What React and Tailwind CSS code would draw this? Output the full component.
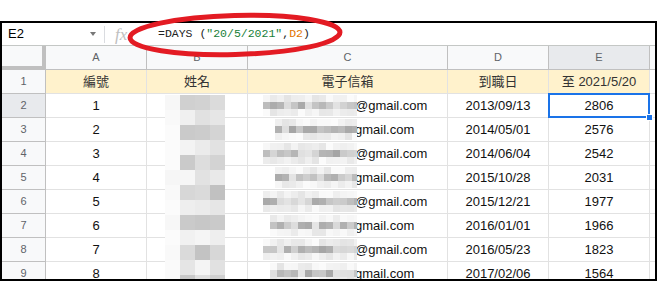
import React from "react";

function rnd(i) {
  const x = Math.sin(i * 12.9898 + 78.233) * 43758.5453;
  return x - Math.floor(x);
}

const rows = [
  ["1", "@gmail.com", "2013/09/13", "2806"],
  ["2", "gmail.com", "2014/05/01", "2576"],
  ["3", "@gmail.com", "2014/06/04", "2542"],
  ["4", "gmail.com", "2015/10/28", "2031"],
  ["5", "@gmail.com", "2015/12/21", "1977"],
  ["6", "gmail.com", "2016/01/01", "1966"],
  ["7", "@gmail.com", "2016/05/23", "1823"],
  ["8", "gmail.com", "2017/02/06", "1564"],
];

const emailStarts = [263, 275, 263, 275, 263, 270, 263, 270];

function NameMosaic() {
  const blocks = [];
  for (let r = 0; r < 13; r++) {
    for (let c = 0; c < 4; c++) {
      let g;
      if (c === 0) g = 246 + Math.floor(rnd(r * 7 + c) * 6);
      else {
        const v = rnd(r * 11 + c * 3 + 5);
        g = r % 2 === 0 ? 190 + Math.floor(v * 35) : 225 + Math.floor(v * 22);
      }
      blocks.push(
        <div
          key={r + "-" + c}
          style={{ backgroundColor: `rgb(${g},${g},${g})` }}
        />
      );
    }
  }
  return (
    <div className="absolute left-[163px] top-[72px] grid grid-cols-[15px_15px_15px_15px] auto-rows-[15px]">
      {blocks}
    </div>
  );
}

function EmailMosaic({ index }) {
  const start = emailStarts[index];
  const width = 357 - start;
  const n = Math.ceil(width / 7);
  const strips = [0, 1, 2];
  return (
    <div
      className="absolute flex flex-col"
      style={{ left: start - 2, top: 72 + index * 24, width }}
    >
      {strips.map((s) => (
        <div key={s} className="flex h-[7px] overflow-hidden">
          {Array.from({ length: n }).map((_, k) => {
            const v = rnd(index * 97 + s * 31 + k * 3 + 1);
            const g =
              s === 1
                ? 165 + Math.floor(v * 65)
                : 228 + Math.floor(v * 24);
            return (
              <div
                key={k}
                className="w-[7px] shrink-0"
                style={{ backgroundColor: `rgb(${g},${g},${g})` }}
              />
            );
          })}
        </div>
      ))}
    </div>
  );
}

const colW = ["w-[101px]", "w-[101px]", "w-[200px]", "w-[101px]", "w-[101px]"];

export default function App() {
  return (
    <div className="relative w-[660px] h-[282px] bg-white overflow-hidden font-['Liberation_Sans',sans-serif]">
      <div className="mt-[21px] w-[657px] h-[260px] border-2 border-black overflow-hidden relative bg-white">
        {/* formula bar */}
        <div className="flex h-[23px] border-b border-[#c4c7c5] items-center">
          <div className="w-[102px] flex items-center justify-between pl-[6px] pr-[8px]">
            <span className="text-[13px] text-black">E2</span>
            <span className="w-0 h-0 border-l-[3.5px] border-r-[3.5px] border-t-[4px] border-l-transparent border-r-transparent border-t-[#777]" />
          </div>
          <div className="w-px h-[17px] bg-[#dadce0]" />
          <div className="w-[53px] pl-[10px] text-[17px] italic text-[#c0c0c0] font-['Liberation_Serif',serif] leading-none">
            fx
          </div>
          <div className="text-[11.5px] font-['Liberation_Mono',monospace] text-[#222] whitespace-pre">
            =DAYS (<span className="text-[#188038]">"20/5/2021"</span>,<span className="text-[#e37400]">D2</span>)
          </div>
        </div>
        {/* column header */}
        <div className="flex h-[24px] bg-[#f8f9fa] text-[11px] text-[#5f6368]">
          <div className="w-[44px] border-r-4 border-b-4 border-[#c0c0c0]" />
          {["A", "B", "C", "D", "E"].map((l, i) => (
            <div
              key={l}
              className={`${colW[i]} flex items-center justify-center border-r border-b border-[#c0c0c0] ${
                l === "E" ? "bg-[#e8eaed]" : ""
              }`}
            >
              {l}
            </div>
          ))}
          <div className="flex-1 border-b border-[#c0c0c0]" />
        </div>
        {/* row 1 */}
        <div className="flex h-[24px] text-[13px]">
          <div className="w-[44px] bg-[#f8f9fa] border-r border-b border-[#c0c0c0] flex items-center justify-center text-[11px] text-[#5f6368]">
            1
          </div>
          {["編號", "姓名", "電子信箱", "到職日", "至 2021/5/20"].map((t, i) => (
            <div
              key={t}
              className={`${colW[i]} bg-[#fff2cc] flex items-center justify-center border-r border-b border-[#e2e2e2] text-[#333] font-['Liberation_Sans','Noto_Sans_CJK_TC',sans-serif]`}
            >
              {t}
            </div>
          ))}
          <div className="flex-1 border-b border-[#e2e2e2]" />
        </div>
        {rows.map((r, idx) => (
          <div key={idx} className="flex h-[24px] text-[13px] text-[#111]">
            <div
              className={`w-[44px] border-r border-b border-[#c0c0c0] flex items-center justify-center text-[11px] text-[#5f6368] ${
                idx === 0 ? "bg-[#e8eaed]" : "bg-[#f8f9fa]"
              }`}
            >
              {idx + 2}
            </div>
            <div className={`${colW[0]} flex items-center justify-center border-r border-b border-[#e2e2e2]`}>
              {r[0]}
            </div>
            <div className={`${colW[1]} border-r border-b border-[#e2e2e2]`} />
            <div className={`${colW[2]} flex items-center pl-[107px] border-r border-b border-[#e2e2e2]`}>
              {r[1]}
            </div>
            <div className={`${colW[3]} flex items-center justify-center border-r border-b border-[#e2e2e2]`}>
              {r[2]}
            </div>
            <div className={`${colW[4]} flex items-center justify-center border-r border-b border-[#e2e2e2]`}>
              {r[3]}
            </div>
            <div className="flex-1 border-b border-[#e2e2e2]" />
          </div>
        ))}
        <NameMosaic />
        {rows.map((_, i) => (
          <EmailMosaic key={i} index={i} />
        ))}
        {/* selection */}
        <div className="absolute left-[546px] top-[70px] w-[102px] h-[25px] border-2 border-[#1a73e8]" />
        <div className="absolute left-[644px] top-[91px] w-[7px] h-[7px] bg-[#1a73e8] border border-white" />
      </div>
      <svg
        className="absolute left-0 top-0 pointer-events-none"
        width="660"
        height="282"
      >
        <ellipse
          cx="235"
          cy="35"
          rx="105"
          ry="19.5"
          fill="none"
          stroke="#e31b23"
          strokeWidth="5"
          transform="rotate(-1.5 235 35)"
        />
      </svg>
    </div>
  );
}
